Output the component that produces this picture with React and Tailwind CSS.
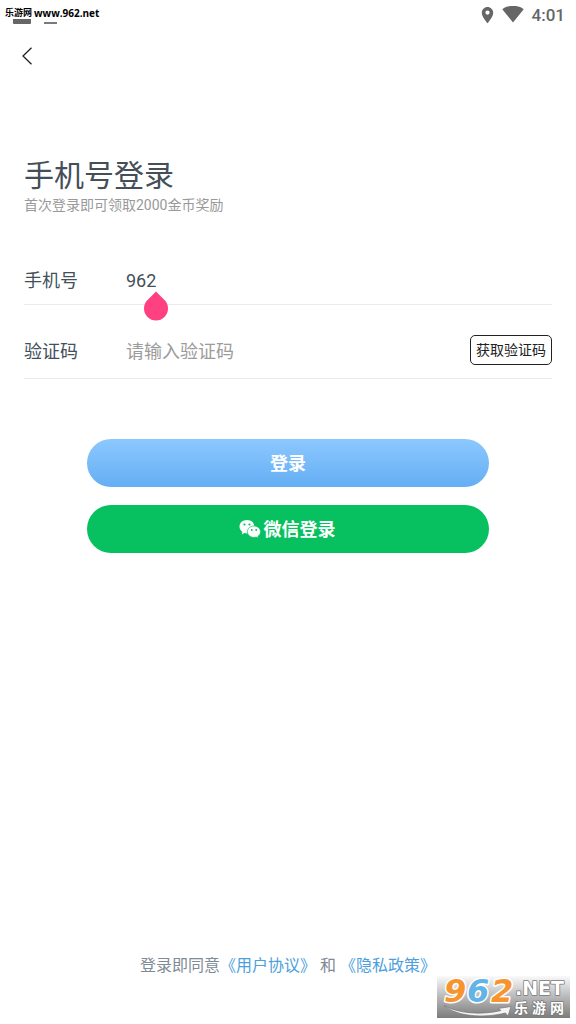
import React, { useState } from "react";

function StatusBar() {
  return (
    <div className="relative flex h-[30px] items-center justify-end pr-[11px] text-[#666666]">
      <span className="absolute left-[13px] top-[19px] h-[5px] w-[18px] rounded-b-[1px] bg-[#666666]" />
      <span className="absolute left-[44px] top-[22px] h-[2px] w-[13px] bg-[#7a7a7a]" />
      <span className="absolute left-[5px] top-[7px] flex items-center gap-[2px] whitespace-nowrap leading-3 text-black">
        <span className="text-[9px] font-bold">乐游网</span>
        <span className="font-['Open_Sans','Noto_Sans',sans-serif] text-[10px] font-bold">www.962.net</span>
      </span>
      <svg className="mr-2 h-[18px] w-[13px]" viewBox="0 0 12 18" fill="currentColor" aria-hidden="true">
        <path
          fillRule="evenodd"
          d="M6 1C2.9 1 0.3 3.5 0.3 6.7C0.3 10.900 6 17.200 6 17.200S11.700 10.900 11.700 6.700C11.700 3.500 9.100 1 6 1ZM6 8.700A2.100 2.100 0 1 1 6 4.500A2.100 2.100 0 0 1 6 8.700Z"
        />
      </svg>
      <svg className="mr-2 h-[18px] w-[22px]" viewBox="0 0 22 18" fill="currentColor" aria-hidden="true">
        <path d="M11 16.500L0.300 3.200C3.200 0.900 6.900 -0.200 11 -0.200S18.800 0.900 21.700 3.200Z" />
      </svg>
      <span className="text-[17px] font-medium leading-5">4:01</span>
    </div>
  );
}

function WeChatIcon() {
  return (
    <svg className="h-5 w-[22px]" viewBox="0 0 22 20" aria-hidden="true">
      <path
        fill="#fff"
        d="M8 0C3.700 0 0.500 2.800 0.500 6.600C0.500 8.900 1.600 10.800 3.400 12L2.700 14.400L5.400 13C6.300 13.300 7.200 13.400 8 13.400C12.200 13.400 15.400 10.400 15.400 6.600S12.200 0 8 0Z"
      />
      <path
        fill="#fff"
        stroke="#07c160"
        strokeWidth="0.7"
        d="M15 6C11.300 6 8.400 8.500 8.400 11.700S11.300 17.400 15 17.400C15.800 17.400 16.600 17.300 17.300 17.100L19.500 18.300L18.900 16.300C20.500 15.300 21.500 13.600 21.500 11.700C21.500 8.500 18.600 6 15 6Z"
      />
      <g fill="#07c160">
        <circle cx="5.500" cy="4.500" r="1.100" />
        <circle cx="10.500" cy="4.500" r="1.100" />
        <circle cx="12.800" cy="10" r="0.900" />
        <circle cx="17.200" cy="10" r="0.900" />
      </g>
    </svg>
  );
}

function SiteMark() {
  return (
    <svg
      className="absolute bottom-[6px] right-[6px] h-[42px] w-[133px] overflow-visible"
      viewBox="0 0 133 42"
      role="img"
      aria-label="962.NET 乐游网"
    >
      <defs>
        <linearGradient id="markBack" x1="0" y1="0" x2="0" y2="1">
          <stop offset="0" stopColor="#fafafa" />
          <stop offset="0.5" stopColor="#b8b8b8" />
          <stop offset="1" stopColor="#7c7c7c" />
        </linearGradient>
      </defs>
      <rect width="133" height="42" fill="url(#markBack)" />
      <path
        d="M7 29.500C22 38 46 39 64 34.500L61 32.500L74 30.500L71 40L68.500 37C46 42.500 20 40.500 7 29.500Z"
        fill="#f4f4f4"
        stroke="#777"
        strokeWidth="0.7"
      />
      <g
        className="font-['DejaVu_Sans',sans-serif] text-[32px] font-bold italic"
        stroke="#fff"
        strokeWidth="3"
        paintOrder="stroke"
        strokeLinejoin="round"
      >
        <text x="7" y="26" fill="#f7942e">9</text>
        <text x="30" y="26" fill="#62b3e8">6</text>
        <text x="54" y="26" fill="#f7942e">2</text>
      </g>
      <g fill="#fff" stroke="#777" strokeWidth="1.500" paintOrder="stroke" strokeLinejoin="round">
        <text x="78" y="19" className="font-['DejaVu_Sans',sans-serif] text-[19px] font-bold">.NET</text>
        <text x="77" y="37" className="font-['Noto_Sans_CJK_SC',sans-serif] text-[14px] font-bold">乐</text>
        <text x="95" y="37" className="font-['Noto_Sans_CJK_SC',sans-serif] text-[14px] font-bold">游</text>
        <text x="113" y="37" className="font-['Noto_Sans_CJK_SC',sans-serif] text-[14px] font-bold">网</text>
      </g>
    </svg>
  );
}

export default function App() {
  const [phone, setPhone] = useState("962");
  const [code, setCode] = useState("");

  return (
    <div className="relative flex min-h-screen flex-col bg-white font-['Roboto','Noto_Sans_CJK_SC',sans-serif] text-[#444f5a]">
      <StatusBar />
      <header className="flex h-[52px] items-center px-[15px]">
        <button type="button" aria-label="返回" className="flex size-6 items-center justify-center text-[#222222]">
          <svg className="h-[18px] w-3" viewBox="0 0 12 18" fill="none" stroke="currentColor" strokeWidth="1.300" aria-hidden="true">
            <path d="M10.500 0.700L2 9L10.500 17.300" />
          </svg>
        </button>
      </header>

      <main className="flex flex-1 flex-col px-6 pt-[76px]">
        <h1 className="text-[30px] leading-9">手机号登录</h1>
        <p className="text-sm leading-[22px] text-[#999999]">首次登录即可领取2000金币奖励</p>

        <form className="mt-10 flex flex-col" onSubmit={(e) => e.preventDefault()}>
          <div className="flex h-[49px] items-center border-b border-[#ebebeb] pt-0.5 text-lg">
            <label htmlFor="phone" className="w-[102px] shrink-0">手机号</label>
            <div className="relative min-w-0 flex-1">
              <input
                id="phone"
                type="tel"
                value={phone}
                onChange={(e) => setPhone(e.target.value)}
                className="w-full bg-transparent outline-none"
              />
              <svg className="absolute left-[18px] top-6 h-[30px] w-6" viewBox="0 0 24 30" aria-hidden="true">
                <path fill="#ff4081" d="M12 0.500L20.500 9A12 12 0 1 1 3.500 9Z" />
              </svg>
            </div>
          </div>

          <div className="flex h-[74px] items-center border-b border-[#ebebeb] pb-[13px] pt-[30px] text-lg">
            <label htmlFor="code" className="w-[102px] shrink-0 pt-[3px]">验证码</label>
            <input
              id="code"
              type="text"
              value={code}
              onChange={(e) => setCode(e.target.value)}
              placeholder="请输入验证码"
              className="min-w-0 flex-1 bg-transparent pt-[3px] outline-none placeholder:text-[#9b9b9b]"
            />
            <button
              type="button"
              className="h-[30px] shrink-0 rounded-[5px] border border-[#222222] px-[5px] text-sm text-[#222222]"
            >
              获取验证码
            </button>
          </div>

          <div className="mt-[60px] flex flex-col gap-[18px] px-[63px]">
            <button
              type="submit"
              className="h-12 rounded-full bg-linear-to-b from-[#8cc8ff] to-[#64aef4] pt-0.5 text-lg font-bold text-white"
            >
              登录
            </button>
            <button
              type="button"
              className="flex h-12 items-center justify-center gap-[3px] rounded-full bg-[#07c160] pr-0.5 pt-0.5 text-lg font-bold text-white"
            >
              <WeChatIcon />
              微信登录
            </button>
          </div>
        </form>
      </main>

      <footer className="pb-[46px] text-center text-base leading-6 text-[#808b96]">
        登录即同意<a href="#terms" className="text-[#4d9fdc]">《用户协议》</a> 和 <a href="#privacy" className="text-[#4d9fdc]">《隐私政策》</a>
      </footer>

      <SiteMark />
    </div>
  );
}
